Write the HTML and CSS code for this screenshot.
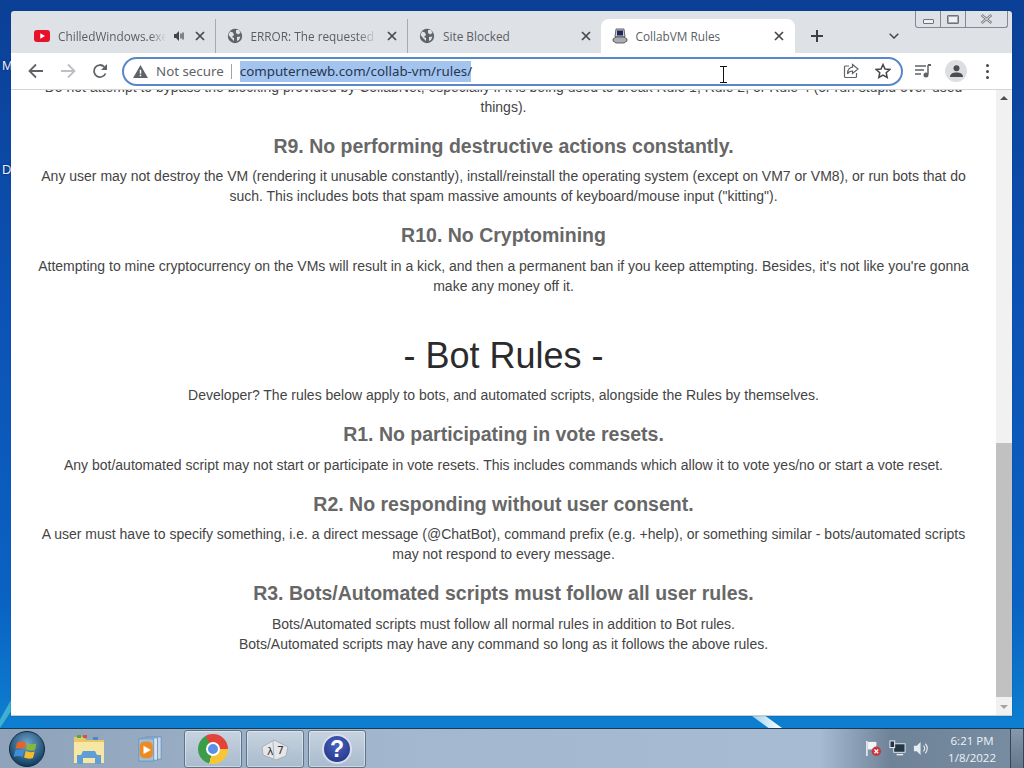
FILE: index.html
```html
<!DOCTYPE html>
<html lang="en">
  <head>
    <meta charset="UTF-8" />
    <title>CollabVM Rules</title>
    <link rel="stylesheet" href="styles.css">
  </head>
  <body>
    <div class="desktop">
      <span class="deskLabel labelM">M</span>
      <span class="deskLabel labelD">D</span>
      <span class="streak streakLeft"></span>
      <span class="streak streakRight"></span>
      <div class="window">
        <div class="tabstrip">
          <div class="tab">
            <svg class="favicon" viewBox="0 0 16 12"><rect width="16" height="12" rx="3" fill="#e8112a"/><path d="M6.3 3.2v5.6L11 6z" fill="#fff"/></svg>
            <span class="tabTitle fade">ChilledWindows.exe</span>
            <svg class="speaker" viewBox="0 0 12 12"><path d="M1 4h2l3-3v10L3 8H1z" fill="#444"/><path d="M8 3.5v5M10 2.5v7" stroke="#444" stroke-width="1.2"/></svg>
            <svg class="closeX" viewBox="0 0 10 10"><path d="M1 1l8 8M9 1l-8 8" stroke="#45484c" stroke-width="1.7"/></svg>
          </div>
          <div class="tab">
            <svg class="favicon globe" viewBox="0 0 16 16"><circle cx="8" cy="8" r="7.2" fill="#5f6368"/><path d="M3 3.5l3 1 1 2.500-2 2 2 1v3L4 10 1.500 7zM9 2h3l1.500 3L11 6.500 9 5zM10 9l3.500-.5L12 12l-2 1z" fill="#dee1e6"/></svg>
            <span class="tabTitle fade">ERROR: The requested URL</span>
            <svg class="closeX" viewBox="0 0 10 10"><path d="M1 1l8 8M9 1l-8 8" stroke="#45484c" stroke-width="1.7"/></svg>
          </div>
          <div class="tab">
            <svg class="favicon globe" viewBox="0 0 16 16"><circle cx="8" cy="8" r="7.2" fill="#5f6368"/><path d="M3 3.5l3 1 1 2.500-2 2 2 1v3L4 10 1.500 7zM9 2h3l1.500 3L11 6.500 9 5zM10 9l3.500-.5L12 12l-2 1z" fill="#dee1e6"/></svg>
            <span class="tabTitle">Site Blocked</span>
            <svg class="closeX" viewBox="0 0 10 10"><path d="M1 1l8 8M9 1l-8 8" stroke="#45484c" stroke-width="1.7"/></svg>
          </div>
          <div class="tab active">
            <svg class="favicon globe" viewBox="0 0 16 16"><path d="M4 1h8l1 8H3z" fill="#c9ccd3" stroke="#444" stroke-width=".8"/><rect x="5" y="2.500" width="6" height="5" fill="#23235f"/><path d="M1 11l3-2h8l3 2v2l-3 2H4l-3-2z" fill="#a9acb2" stroke="#444" stroke-width=".8"/></svg>
            <span class="tabTitle">CollabVM Rules</span>
            <svg class="closeX" viewBox="0 0 10 10"><path d="M1 1l8 8M9 1l-8 8" stroke="#45484c" stroke-width="1.7"/></svg>
          </div>
          <svg class="newTab" viewBox="0 0 12 12"><path d="M6 0v12M0 6h12" stroke="#3c4043" stroke-width="2"/></svg>
          <svg class="tabList" viewBox="0 0 10 6"><path d="M.7.7L5 5 9.300.7" fill="none" stroke="#45484c" stroke-width="1.500"/></svg>
          <div class="caption">
            <div class="capBtn"><span class="capMin"></span></div>
            <div class="capBtn"><span class="capMax"></span></div>
            <div class="capBtn capClose">
              <svg viewBox="0 0 12 10"><path d="M1 1l10 8M11 1L1 9" stroke="#75787d" stroke-width="2.400"/><path d="M1 1l10 8M11 1L1 9" stroke="#eceef1" stroke-width=".9"/></svg>
            </div>
          </div>
        </div>
        <div class="toolbar">
          <svg class="navIcon" viewBox="0 0 16 16"><path d="M15 8H2M8 1.500L1.500 8 8 14.500" fill="none" stroke="#5f6368" stroke-width="1.800"/></svg>
          <svg class="navIcon" viewBox="0 0 16 16"><path d="M1 8h13M8 1.500L14.500 8 8 14.500" fill="none" stroke="#bcbfc4" stroke-width="1.800"/></svg>
          <svg class="navIcon" viewBox="0 0 16 16"><path d="M13.500 10.500A6 6 0 1 1 12.300 3.800" fill="none" stroke="#5f6368" stroke-width="1.800"/><path d="M15 1v6H9z" fill="#5f6368"/></svg>
          <div class="omnibox">
            <svg class="warnIcon" viewBox="0 0 16 14"><path d="M8 0l8 14H0z" fill="#5f6368"/><path d="M7.200 5h1.600v4.500H7.200zM7.200 10.500h1.600V12H7.200z" fill="#fff"/></svg>
            <span class="notSecure">Not secure</span>
            <span class="omniSep"></span>
            <span class="url">computernewb.com/collab-vm/rules/</span>
            <svg class="omniIcon shareIcon" viewBox="0 0 16 16"><path d="M6 3H2.500A1 1 0 0 0 1.500 4v9.500a1 1 0 0 0 1 1h10a1 1 0 0 0 1-1V10" fill="none" stroke="#5f6368" stroke-width="1.200"/><path d="M9.500 1.500L15 6l-5.500 4.500V8C7 8 5.500 9 4.500 11c0-4 2-6.500 5-6.800z" fill="none" stroke="#5f6368" stroke-width="1.200"/></svg>
            <svg class="omniIcon" viewBox="0 0 16 16"><path d="M8 1.500l2 4.500 4.800.5-3.600 3.200 1 4.800L8 12l-4.200 2.500 1-4.800L1.200 6.500 6 6z" fill="none" stroke="#45484c" stroke-width="1.500"/></svg>
          </div>
          <svg class="mediaIcon" viewBox="0 0 16 14"><path d="M0 2h11M0 6h9M0 10h6" stroke="#5f6368" stroke-width="1.500"/><path d="M13 1v9" stroke="#5f6368" stroke-width="1.500"/><path d="M13 1h3" stroke="#5f6368" stroke-width="2"/><circle cx="11" cy="11" r="2.500" fill="#5f6368"/></svg>
          <div class="avatar">
            <svg viewBox="0 0 14 14"><circle cx="7" cy="3.500" r="3.200" fill="#4a4d52"/><path d="M0 13c0-3.500 3-5 7-5s7 1.500 7 5z" fill="#4a4d52"/></svg>
          </div>
          <div class="kebab"><span></span><span></span><span></span></div>
        </div>
        <div class="viewport">
          <main class="page">
            <p>Do not attempt to bypass the blocking provided by CollabNet, especially if it is being used to break Rule 1, Rule 2, or Rule 4 (or run stupid over-used things).</p>
            <h3>R9. No performing destructive actions constantly.</h3>
            <p>Any user may not destroy the VM (rendering it unusable constantly), install/reinstall the operating system (except on VM7 or VM8), or run bots that do such. This includes bots that spam massive amounts of keyboard/mouse input ("kitting").</p>
            <h3>R10. No Cryptomining</h3>
            <p>Attempting to mine cryptocurrency on the VMs will result in a kick, and then a permanent ban if you keep attempting. Besides, it's not like you're gonna make any money off it.</p>
            <h1>- Bot Rules -</h1>
            <p>Developer? The rules below apply to bots, and automated scripts, alongside the Rules by themselves.</p>
            <h3>R1. No participating in vote resets.</h3>
            <p>Any bot/automated script may not start or participate in vote resets. This includes commands which allow it to vote yes/no or start a vote reset.</p>
            <h3>R2. No responding without user consent.</h3>
            <p>A user must have to specify something, i.e. a direct message (@ChatBot), command prefix (e.g. +help), or something similar - bots/automated scripts may not respond to every message.</p>
            <h3>R3. Bots/Automated scripts must follow all user rules.</h3>
            <p>Bots/Automated scripts must follow all normal rules in addition to Bot rules.<br>Bots/Automated scripts may have any command so long as it follows the above rules.</p>
          </main>
          <div class="scrollbar">
            <span class="arrowUp"></span>
            <div class="track"><div class="thumb"></div></div>
            <span class="arrowDown"></span>
          </div>
        </div>
        <svg class="ibeam" viewBox="0 0 7 17"><path d="M0 .5h7M0 16.500h7M3.500 .5v16" stroke="#111" stroke-width="1"/></svg>
      </div>
    </div>
    <div class="taskbar">
      <svg class="orb" viewBox="0 0 36 36">
        <defs>
          <radialGradient id="orbFill" cx="50%" cy="35%" r="65%"><stop offset="0" stop-color="#6fa6cf"/><stop offset="1" stop-color="#0e3a5c"/></radialGradient>
        </defs>
        <circle cx="18" cy="18" r="17.500" fill="url(#orbFill)" stroke="#16293b"/>
        <path d="M8 12c3-2 6-2 9-.5l-1.500 6.500c-3-1.500-6-1.500-9 0z" fill="#e8632a"/>
        <path d="M18.500 12c3 1.500 6 1.500 9 .5L26 19c-3 1-6 .8-9-.5z" fill="#86b83a"/>
        <path d="M6.200 19.500c3-1.500 6-1.500 9 0L13.700 26c-3-1.500-6-1.500-9 0z" fill="#3f8fd8"/>
        <path d="M16.700 20c3 1.300 6 1.500 9 .5L24 27c-3 1-6 .8-9-.5z" fill="#f4bb2b"/>
      </svg>
      <div class="taskBtn plain">
        <svg viewBox="0 0 32 32"><path d="M1 4h10l2 3h18v18H1z" fill="#e8c766"/><path d="M1 9h30v21H1z" fill="#f7e7a4"/><rect x="4" y="2" width="4" height="3" fill="#57a844"/><rect x="10" y="2" width="4" height="3" fill="#d8503a"/><rect x="20" y="4" width="5" height="3" fill="#4b86c8"/><path d="M4 31v-9h4l2-4h12l2 4h4v9h-6v-6H10v6z" fill="#5f9ed6"/></svg>
      </div>
      <div class="taskBtn plain">
        <svg viewBox="0 0 28 28"><rect x="10" y="1" width="16" height="24" fill="#c3d7ea" stroke="#6c94ba"/><rect x="6" y="2" width="16" height="24" fill="#d8e6f3" stroke="#6c94ba"/><rect x="2" y="3" width="16" height="24" fill="#9fc0dd" stroke="#6c94ba"/><rect x="3" y="6" width="14" height="18" rx="5" fill="#ee8a23"/><path d="M7 10.500l8 4.500-8 4.500z" fill="#fff"/></svg>
      </div>
      <div class="taskBtn">
        <div class="chrome"><span class="chromeEye"></span></div>
      </div>
      <div class="taskBtn">
        <svg viewBox="0 0 32 24" class="lambda"><path d="M3 10l12-7 14 7-2 9-10 4-13-5z" fill="#e4e6ea" stroke="#a9adb4"/><path d="M14 4l1 19" stroke="#b3b7bd"/><text x="8" y="18" class="cubeText">λ</text><text x="18" y="17" class="cubeText">7</text></svg>
      </div>
      <div class="taskBtn">
        <div class="help">?</div>
      </div>
      <div class="tray">
        <svg class="trayIcon" viewBox="0 0 18 18"><path d="M2 1v16" stroke="#fff" stroke-width="1.400"/><path d="M3 2h9v8H3z" fill="#f2f4f7"/><circle cx="12" cy="12" r="5" fill="#c8393f"/><path d="M10 10l4 4M14 10l-4 4" stroke="#fff" stroke-width="1.300"/></svg>
        <svg class="trayIcon" viewBox="0 0 18 18"><rect x="5" y="4" width="12" height="9" fill="#233645" stroke="#e8edf2"/><rect x="1" y="1" width="5" height="7" fill="#233645" stroke="#f4f6f8"/><path d="M8 15.500h7" stroke="#e8edf2" stroke-width="1.500"/></svg>
        <svg class="trayIcon" viewBox="0 0 18 18"><path d="M1 6h3l4-4v14l-4-4H1z" fill="#e6ebf0"/><path d="M11 6a4 4 0 0 1 0 6M13 4a7 7 0 0 1 0 10" fill="none" stroke="#e6ebf0" stroke-width="1.200"/></svg>
        <div class="clock"><span>6:21 PM</span><span>1/8/2022</span></div>
        <div class="showDesktop"></div>
      </div>
    </div>
  </body>
</html>
```

FILE: styles.css
```css
* {
  --chrome-grey: #dee1e6;
  --tab-text: #5b5e63;
  --icon-grey: #5f6368;
  box-sizing: border-box;
}
html,
body {
  height: 100%;
}
body {
  margin: 0;
  width: 1024px;
  height: 768px;
  overflow: hidden;
  display: flex;
  flex-direction: column;
  font-family: "Liberation Sans", Arial, sans-serif;
}
svg {
  display: block;
  flex: none;
}

/* desktop and window */
.desktop {
  position: relative;
  height: 728px;
  padding: 11px 12px 12px 11px;
  background: linear-gradient(180deg, #0b3f96 0, #0c52b4 300px, #0a62c2 600px, #0d7fd0 728px);
}
.deskLabel {
  position: absolute;
  left: 2px;
  color: #e8eefb;
  font-size: 13px;
  text-shadow: 0 0 2px #001a50;
}
.labelM {
  top: 58px;
}
.labelD {
  top: 162px;
}
.streak {
  position: absolute;
}
.streakLeft {
  left: 0;
  top: 700px;
  width: 11px;
  height: 28px;
  background: #3fb0cf;
  clip-path: polygon(100% 0, 100% 40%, 0 100%, 0 70%);
}
.streakRight {
  left: 752px;
  top: 716px;
  width: 30px;
  height: 12px;
  background: linear-gradient(90deg, #9fd2ee, #ffffff);
  clip-path: polygon(0 0, 45% 0, 100% 100%, 55% 100%);
}
.window {
  position: relative;
  height: 100%;
  display: flex;
  flex-direction: column;
  background: var(--chrome-grey);
  border-radius: 3px 3px 0 0;
  box-shadow: 0 0 1px #052a60;
}

/* tabs */
.tabstrip {
  position: relative;
  height: 42px;
  flex: none;
  display: flex;
  align-items: flex-end;
  padding-left: 12px;
}
.tab {
  width: 192.500px;
  height: 34px;
  display: flex;
  align-items: center;
  padding: 0 10px 0 11px;
  border-right: 1px solid #a8abb0;
  background-clip: content-box;
  font-family: "Open Sans", sans-serif;
  font-size: 11.800px;
  color: var(--tab-text);
}
.tab:nth-child(3) {
  border-right: none;
}
.tab.active {
  width: 194px;
  height: 34px;
  padding-right: 11px;
  background: #fff;
  border: none;
  border-radius: 8px 8px 0 0;
}
.favicon {
  width: 16px;
  height: 12px;
  margin-right: 8px;
}
.globe {
  height: 16px;
}
.tabTitle {
  flex: 1;
  min-width: 0;
  white-space: nowrap;
  overflow: hidden;
}
.fade {
  -webkit-mask-image: linear-gradient(90deg, #000 85%, transparent);
  mask-image: linear-gradient(90deg, #000 85%, transparent);
}
.speaker {
  width: 12px;
  height: 12px;
  margin-left: 7px;
}
.closeX {
  width: 10px;
  height: 10px;
  margin-left: 10px;
}
.newTab {
  width: 12px;
  height: 12px;
  margin: 0 0 11px 16px;
}
.tabList {
  width: 10px;
  height: 6px;
  margin: 0 0 14px 66px;
}
.caption {
  position: absolute;
  top: 0;
  right: 4px;
  height: 17px;
  display: flex;
  border: 1px solid #85888e;
  border-top: none;
  border-radius: 0 0 3px 3px;
}
.capBtn {
  width: 25px;
  display: flex;
  align-items: center;
  justify-content: center;
  border-right: 1px solid #85888e;
}
.capClose {
  width: 41px;
  border-right: none;
}
.capClose svg {
  width: 13px;
  height: 10px;
}
.capMin {
  width: 11px;
  height: 5px;
  margin-top: 5px;
  border: 1px solid #6f7277;
  border-radius: 1px;
  background: #eef0f3;
}
.capMax {
  width: 12px;
  height: 9px;
  border: 1px solid #6f7277;
  border-radius: 1px;
  background: #eef0f3;
  box-shadow: inset 0 0 0 1px #a5a8ad;
}

/* toolbar */
.toolbar {
  height: 37px;
  flex: none;
  display: flex;
  align-items: center;
  background: #fff;
  padding-left: 17px;
  border-bottom: 1px solid #d3d5d9;
}
.navIcon {
  width: 16px;
  height: 16px;
  margin-right: 16px;
}
.omnibox {
  width: 781px;
  height: 29px;
  margin-left: -2px;
  display: flex;
  align-items: center;
  padding: 0 10px 0 9px;
  border: 2px solid #5a87c9;
  border-radius: 15px;
  font-family: "Noto Sans", sans-serif;
  font-size: 13.330px;
}
.warnIcon {
  width: 15px;
  height: 13px;
}
.notSecure {
  margin-left: 8px;
  color: #5f6368;
}
.omniSep {
  width: 1px;
  height: 15px;
  margin: 0 8px 0 7px;
  background: #a0a3a8;
}
.url {
  flex: none;
  width: 231px;
  height: 21px;
  line-height: 20px;
  margin-right: auto;
  background: #a4c4f0;
  color: #26364f;
  white-space: nowrap;
}
.omniIcon {
  width: 16px;
  height: 16px;
  margin-left: 16px;
}
.mediaIcon {
  width: 16px;
  height: 14px;
  margin-left: 12px;
}
.avatar {
  width: 22px;
  height: 22px;
  margin-left: 14px;
  display: flex;
  align-items: center;
  justify-content: center;
  border-radius: 50%;
  background: #dcdee1;
}
.avatar svg {
  width: 13px;
  height: 13px;
}
.kebab {
  margin-left: 19px;
  display: flex;
  flex-direction: column;
  gap: 3px;
}
.kebab span {
  width: 3px;
  height: 3px;
  border-radius: 50%;
  background: #45484c;
}

/* page */
.viewport {
  flex: 1;
  min-height: 0;
  display: flex;
  overflow: hidden;
  background: #fff;
  border-bottom: 1px solid #c9ccd1;
}
.page {
  flex: 1;
  min-width: 0;
  margin-top: -13.200px;
  padding: 0 24px;
  text-align: center;
  font-size: 14px;
  line-height: 20px;
  color: #444;
}
.page p {
  margin: 0;
}
.page h3 {
  margin: 18px 0 8.500px;
  font-size: 19.500px;
  line-height: 23px;
  font-weight: bold;
  color: #676767;
}
.page h1 {
  margin: 39px 0 9.300px;
  font-size: 36px;
  line-height: 41px;
  font-weight: normal;
  color: #2b2b2b;
}
.scrollbar {
  width: 16px;
  flex: none;
  display: flex;
  flex-direction: column;
  align-items: center;
  background: #f1f1f1;
}
.arrowUp,
.arrowDown {
  width: 0;
  height: 4px;
  flex: none;
  margin: 6px 0;
  border-left: 4px solid transparent;
  border-right: 4px solid transparent;
}
.arrowUp {
  border-bottom: 4px solid #505050;
}
.arrowDown {
  border-top: 4px solid #a3a3a3;
}
.track {
  flex: 1;
  width: 100%;
  display: flex;
  align-items: flex-end;
  padding-bottom: 2px;
}
.thumb {
  width: 100%;
  height: 254px;
  background: #c1c1c1;
}
.ibeam {
  position: absolute;
  left: 709px;
  top: 55px;
  width: 7px;
  height: 17px;
}

/* taskbar */
.taskbar {
  height: 40px;
  flex: none;
  display: flex;
  align-items: center;
  padding-left: 9px;
  border-top: 1px solid #1c3954;
  background: linear-gradient(90deg, #8ea3b9 0, #a3b8cf 40%, #a7bcd3 80%, #6e8398 87%, #788da2 100%);
}
.orb {
  width: 36px;
  height: 36px;
  margin-right: 17px;
}
.taskBtn {
  width: 58px;
  height: 38px;
  margin-right: 4px;
  display: flex;
  align-items: center;
  justify-content: center;
  border: 1px solid #5f7488;
  border-radius: 3px;
  background: linear-gradient(180deg, #c7d3df, #a9bbcd);
  box-shadow: inset 0 0 0 1px rgba(255, 255, 255, 0.4);
}
.taskBtn.plain {
  width: 54px;
  margin-right: 7px;
  border: none;
  background: none;
  box-shadow: none;
}
.taskBtn.plain svg {
  width: 32px;
  height: 32px;
}
.taskBtn.plain + .taskBtn.plain svg {
  width: 26px;
  height: 26px;
}
.chrome {
  width: 30px;
  height: 30px;
  display: flex;
  align-items: center;
  justify-content: center;
  border-radius: 50%;
  background: conic-gradient(from -30deg, #e2433a 0 120deg, #f6c636 120deg 225deg, #3d9c4a 225deg 330deg);
}
.chromeEye {
  width: 14px;
  height: 14px;
  border-radius: 50%;
  background: #5a90e8;
  border: 2px solid #fff;
}
.lambda {
  width: 32px;
  height: 24px;
}
.cubeText {
  font-family: "DejaVu Sans", sans-serif;
  font-size: 11px;
  fill: #333;
}
.help {
  width: 30px;
  height: 30px;
  border-radius: 50%;
  border: 2px solid #d9deeb;
  background: radial-gradient(circle at 50% 35%, #4a64c0, #1d2f80);
  color: #fff;
  text-align: center;
  font-size: 23px;
  line-height: 26px;
  font-weight: bold;
}
.tray {
  margin-left: auto;
  display: flex;
  align-items: center;
  gap: 7px;
  height: 100%;
}
.trayIcon {
  width: 17px;
  height: 17px;
}
.clock {
  margin-left: 11px;
  display: flex;
  flex-direction: column;
  align-items: center;
  font-family: "Open Sans", sans-serif;
  font-size: 11.500px;
  line-height: 17px;
  color: #eef2f6;
}
.showDesktop {
  width: 14px;
  height: 100%;
  margin-left: 7px;
  border-left: 1px solid #33475a;
  border-right: 1px solid #33475a;
  background: linear-gradient(180deg, #8698aa, #64788c);
}
```
